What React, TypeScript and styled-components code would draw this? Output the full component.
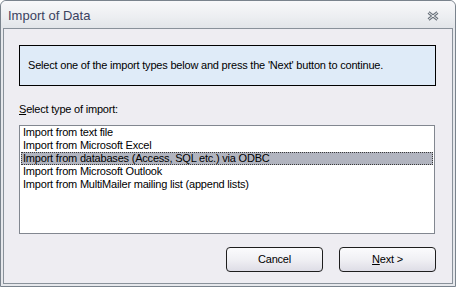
import React from "react";
import styled, { createGlobalStyle } from "styled-components";

const GlobalStyle = createGlobalStyle`
  body {
    margin: 0;
    font-family: "Liberation Sans", Arial, sans-serif;
    font-size: 11px;
    letter-spacing: -0.2px;
    color: #000;
  }
`;

const DialogWindow = styled.div`
  width: 456px;
  height: 287px;
  box-sizing: border-box;
  border: 1px solid #7a838d;
  border-radius: 6px 6px 0 0;
  background: #e6e8ec;
  display: flex;
  flex-direction: column;
  overflow: hidden;
`;

const TitleBar = styled.div`
  height: 27px;
  flex: none;
  display: flex;
  align-items: center;
  justify-content: space-between;
  padding: 0 16px 0 7px;
  background: linear-gradient(#f8f8fa, #eceef1 60%, #e2e5e9);
  border-radius: 5px 5px 0 0;
`;

const Title = styled.span`
  font-size: 13px;
  letter-spacing: 0;
  color: #3b4260;
  padding-top: 1px;
`;

const CloseIcon = styled.svg`
  width: 12px;
  height: 10px;
  margin-top: 2px;
`;

const Client = styled.div`
  flex: 1;
  margin: 0 2px 2px 2px;
  border: 1px solid #89919a;
  background: #eeedf2;
  display: flex;
  flex-direction: column;
  padding: 16px 16px 0 15px;
`;

const InfoBox = styled.div`
  height: 41px;
  box-sizing: border-box;
  border: 1px solid #000;
  background: #dfebf8;
  display: flex;
  align-items: center;
  padding: 0 0 1px 8px;
`;

const FieldLabel = styled.div`
  margin-top: 17px;
  height: 13px;
  line-height: 13px;

  u {
    text-decoration: underline;
  }
`;

const ListBox = styled.div`
  margin-top: 9px;
  margin-right: 1px;
  height: 109px;
  box-sizing: border-box;
  border: 1px solid #828790;
  background: #fff;
  padding: 0 1px 0 1px;
`;

const ListRow = styled.div<{ $selected?: boolean }>`
  height: 13px;
  line-height: 11px;
  box-sizing: border-box;
  padding-left: 1px;
  white-space: nowrap;
  background: ${(p) => (p.$selected ? "#b1b4bf" : "transparent")};
  border: 1px dotted ${(p) => (p.$selected ? "#3a3a3a" : "transparent")};
`;

const ButtonRow = styled.div`
  display: flex;
  justify-content: flex-end;
  gap: 16px;
  margin-top: 13px;
`;

const DialogButton = styled.button`
  width: 97px;
  height: 25px;
  box-sizing: border-box;
  border: 1px solid #1e1e1e;
  border-radius: 4px;
  background: linear-gradient(#fbfbfd, #f0f0f4 50%, #dedde6);
  font-family: "Liberation Sans", Arial, sans-serif;
  font-size: 11px;
  letter-spacing: -0.2px;
  color: #000;
  padding: 0 0 1px 0;
  cursor: pointer;
`;

const items = [
  "Import from text file",
  "Import from Microsoft Excel",
  "Import from databases (Access, SQL etc.) via ODBC",
  "Import from Microsoft Outlook",
  "Import from MultiMailer mailing list (append lists)",
];

const App = () => {
  return (
    <>
      <GlobalStyle />
      <DialogWindow>
        <TitleBar>
          <Title>Import of Data</Title>
          <CloseIcon viewBox="0 0 12 10">
            <path d="M1.5 1.5 L10.5 8.5 M10.5 1.5 L1.5 8.5" stroke="#6b737d" strokeWidth="3" />
            <path d="M1.5 1.5 L10.5 8.5 M10.5 1.5 L1.5 8.5" stroke="#f4f5f7" strokeWidth="1" />
          </CloseIcon>
        </TitleBar>
        <Client>
          <InfoBox>
            Select one of the import types below and press the 'Next' button to continue.
          </InfoBox>
          <FieldLabel>
            <u>S</u>elect type of import:
          </FieldLabel>
          <ListBox>
            {items.map((item, i) => (
              <ListRow key={item} $selected={i === 2}>
                {item}
              </ListRow>
            ))}
          </ListBox>
          <ButtonRow>
            <DialogButton>Cancel</DialogButton>
            <DialogButton>
              <u>N</u>ext &gt;
            </DialogButton>
          </ButtonRow>
        </Client>
      </DialogWindow>
    </>
  );
};

export default App;
